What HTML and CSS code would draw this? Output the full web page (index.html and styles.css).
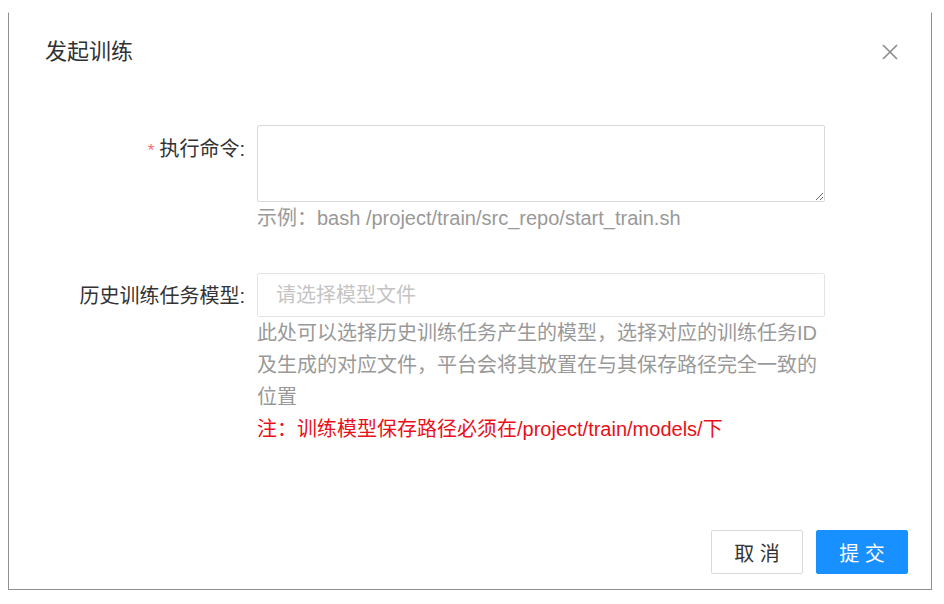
FILE: index.html
```html
<!DOCTYPE html>
<html lang="zh-CN">
<head>
<meta charset="utf-8">
<title>发起训练</title>
<link rel="stylesheet" href="styles.css">
</head>
<body>
<div class="dialog">
  <div class="header">
    <span class="title">发起训练</span>
    <span class="close" aria-label="关闭">
      <svg width="16" height="16" viewBox="0 0 16 16"><path d="M1 1 L15 15 M15 1 L1 15" stroke="#8c8c8c" stroke-width="1.6" fill="none"/></svg>
    </span>
  </div>
  <div class="body">
    <div class="row row-cmd">
      <label class="label label-cmd"><span class="req">*</span>执行命令:</label>
      <div class="field">
        <textarea class="textarea"></textarea>
        <div class="hint">示例：bash /project/train/src_repo/start_train.sh</div>
      </div>
    </div>
    <div class="row">
      <label class="label label-model">历史训练任务模型:</label>
      <div class="field">
        <input class="input" type="text" placeholder="请选择模型文件">
        <div class="desc">此处可以选择历史训练任务产生的模型，选择对应的训练任务ID及生成的对应文件，平台会将其放置在与其保存路径完全一致的位置</div>
        <div class="note">注：训练模型保存路径必须在/project/train/models/下</div>
      </div>
    </div>
  </div>
  <div class="footer">
    <button class="btn btn-cancel">取 消</button>
    <button class="btn btn-primary">提 交</button>
  </div>
</div>
</body>
</html>
```
FILE: styles.css
```css
* { box-sizing: border-box; }
html, body { margin: 0; padding: 0; background: #fff; }
body {
  font-family: "Liberation Sans", "Noto Sans CJK SC", sans-serif;
  color: #333;
  width: 944px;
  height: 604px;
  overflow: hidden;
}
.dialog {
  margin: 12px 0 0 8px;
  width: 924px;
  height: 578px;
  border: 1px solid #8f8f8f;
  border-top-color: transparent;
  display: flex;
  flex-direction: column;
  background: #fff;
}
.header {
  height: 78px;
  display: flex;
  align-items: center;
  justify-content: space-between;
  padding: 0 33px 0 36px;
}
.title {
  font-size: 22px;
  color: #303133;
  line-height: 30px;
}
.close { display: flex; width: 16px; height: 16px; }
.body { padding-top: 34px; }
.row {
  display: flex;
  align-items: flex-start;
  gap: 12px;
}
.row-cmd { margin-bottom: 39px; }
.label {
  width: 236px;
  flex: none;
  text-align: right;
  font-size: 20px;
  color: #333;
}
.label-cmd { line-height: 48px; }
.label-model { line-height: 46px; }
.req { color: #f56c6c; margin-right: 5px; font-size: 17px; }
.field { width: 568px; }
.textarea {
  display: block;
  width: 568px;
  height: 77px;
  border: 1px solid #d9d9d9;
  border-radius: 2px;
  font-family: inherit;
  font-size: 20px;
  padding: 6px 12px;
  margin: 0;
  resize: vertical;
  outline: none;
}
.hint, .desc {
  font-size: 20px;
  line-height: 32px;
  color: #999;
}
.input {
  display: block;
  width: 568px;
  height: 44px;
  border: 1px solid #e4e4e4;
  border-radius: 2px;
  font-family: inherit;
  font-size: 20px;
  padding: 0 18px;
  margin: 0;
  outline: none;
  color: #333;
}
.input::placeholder { color: #c4c4c4; }
.note {
  font-size: 20px;
  line-height: 32px;
  color: #e8101a;
}
.footer {
  margin-top: auto;
  display: flex;
  justify-content: flex-end;
  gap: 13px;
  padding: 0 23px 15px 0;
}
.btn {
  width: 92px;
  height: 44px;
  font-family: inherit;
  font-size: 20px;
  border-radius: 2px;
  cursor: pointer;
  padding: 0;
}
.btn-cancel {
  background: #fff;
  border: 1px solid #d9d9d9;
  color: #333;
}
.btn-primary {
  background: #1890ff;
  border: 1px solid #1890ff;
  color: #fff;
}
```
